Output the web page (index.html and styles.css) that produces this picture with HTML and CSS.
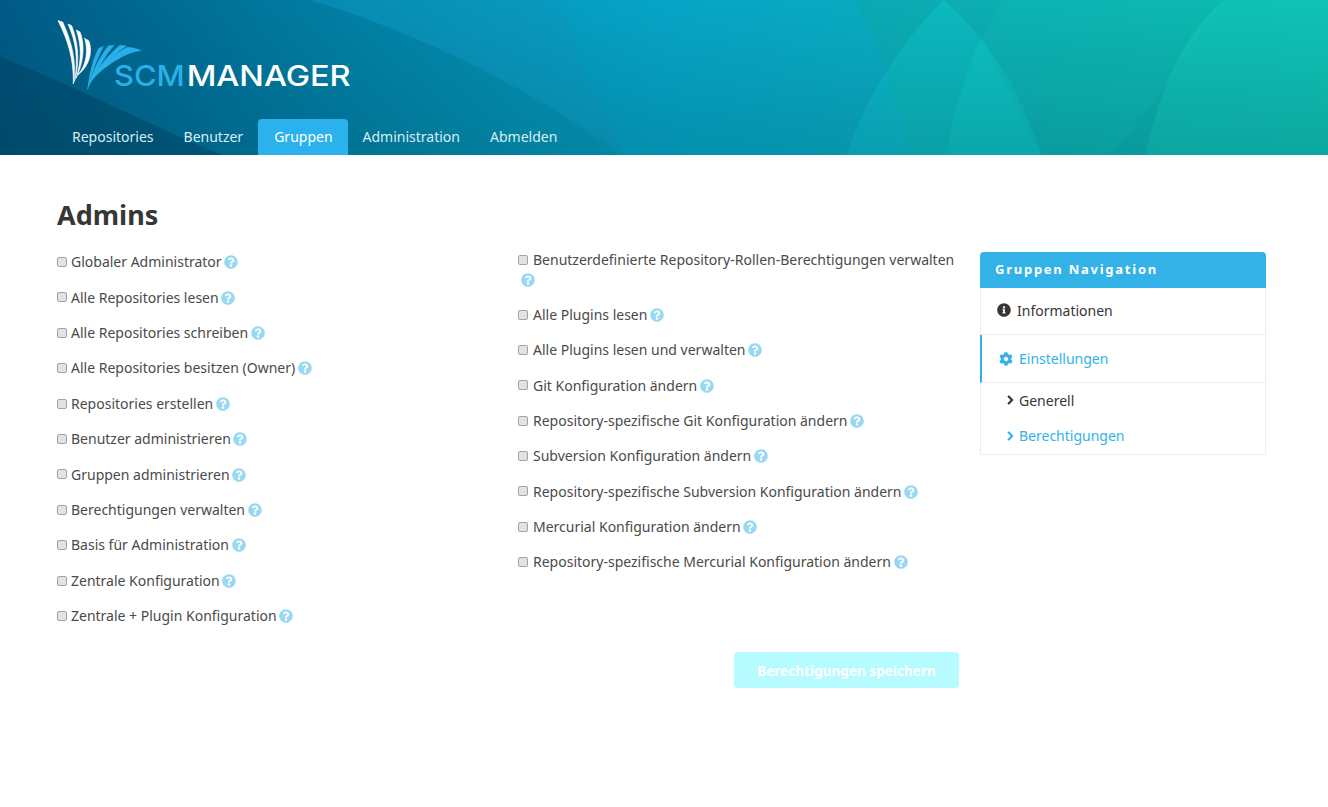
FILE: index.html
```html
<!DOCTYPE html>
<html lang="de">
<head>
  <meta charset="UTF-8">
  <title>SCM-Manager</title>
  <link rel="stylesheet" href="styles.css">
</head>
<body>
  <svg class="icon-defs" width="0" height="0">
    <symbol id="i-help" viewBox="0 0 512 512"><path d="M504 256c0 136.997-111.043 248-248 248S8 392.997 8 256C8 119.083 119.043 8 256 8s248 111.083 248 248zM262.655 90c-54.497 0-89.255 22.957-116.549 63.758-3.536 5.286-2.353 12.415 2.715 16.258l34.699 26.31c5.205 3.947 12.621 3.008 16.665-2.122 17.864-22.658 30.113-35.797 57.303-35.797 20.429 0 45.698 13.148 45.698 32.958 0 14.976-12.363 22.667-32.534 33.976C247.128 238.528 216 254.941 216 296v4c0 6.627 5.373 12 12 12h56c6.627 0 12-5.373 12-12v-1.333c0-28.462 83.186-29.647 83.186-106.667 0-58.002-60.165-102-116.531-102zM256 338c-25.365 0-46 20.635-46 46 0 25.364 20.635 46 46 46s46-20.636 46-46c0-25.365-20.635-46-46-46z"/></symbol>
    <symbol id="i-info" viewBox="0 0 512 512"><path d="M256 8C119.043 8 8 119.083 8 256c0 136.997 111.043 248 248 248s248-111.003 248-248C504 119.083 392.957 8 256 8zm0 110c23.196 0 42 18.804 42 42s-18.804 42-42 42-42-18.804-42-42 18.804-42 42-42zm56 254c0 6.627-5.373 12-12 12h-88c-6.627 0-12-5.373-12-12v-24c0-6.627 5.373-12 12-12h12v-64h-12c-6.627 0-12-5.373-12-12v-24c0-6.627 5.373-12 12-12h64c6.627 0 12 5.373 12 12v100h12c6.627 0 12 5.373 12 12v24z"/></symbol>
    <symbol id="i-cog" viewBox="0 0 512 512"><path d="M487.4 315.7l-42.6-24.6c4.3-23.2 4.3-47 0-70.2l42.6-24.6c4.9-2.8 7.1-8.6 5.5-14-11.1-35.6-30-67.8-54.7-94.6-3.8-4.1-10-5.1-14.8-2.3L380.8 110c-17.9-15.4-38.5-27.3-60.8-35.1V25.8c0-5.6-3.9-10.5-9.4-11.7-36.7-8.2-74.3-7.8-109.2 0-5.5 1.2-9.4 6.1-9.4 11.7V75c-22.2 7.9-42.8 19.8-60.8 35.1L88.7 85.5c-4.9-2.8-11-1.9-14.8 2.3-24.7 26.7-43.6 58.9-54.7 94.6-1.7 5.4.6 11.2 5.5 14L67.3 221c-4.3 23.2-4.3 47 0 70.2l-42.6 24.6c-4.9 2.8-7.1 8.6-5.5 14 11.1 35.6 30 67.8 54.7 94.6 3.8 4.1 10 5.1 14.8 2.3l42.6-24.6c17.9 15.4 38.5 27.3 60.8 35.1v49.2c0 5.6 3.9 10.5 9.4 11.7 36.7 8.2 74.3 7.8 109.2 0 5.5-1.2 9.4-6.1 9.4-11.7v-49.2c22.2-7.9 42.8-19.8 60.8-35.1l42.6 24.6c4.9 2.8 11 1.9 14.8-2.3 24.7-26.7 43.6-58.9 54.7-94.6 1.5-5.5-.7-11.3-5.6-14.1zM256 336c-44.1 0-80-35.9-80-80s35.9-80 80-80 80 35.9 80 80-35.9 80-80 80z"/></symbol>
    <symbol id="i-chevron" viewBox="0 0 320 512"><path d="M285.476 272.971L91.132 467.314c-9.373 9.373-24.569 9.373-33.941 0l-22.667-22.667c-9.357-9.357-9.375-24.522-.04-33.901L188.505 256 34.484 101.255c-9.335-9.379-9.317-24.544.04-33.901l22.667-22.667c9.373-9.373 24.569-9.373 33.941 0L285.475 239.03c9.373 9.372 9.373 24.568.001 33.941z"/></symbol>
  </svg>

  <header class="site-header">
    <!-- header artwork -->
    <svg class="header-bg" viewBox="0 0 1328 155" width="1328" height="155" preserveAspectRatio="none">
      <defs>
        <linearGradient id="bgBase" x1="0" y1="0" x2="1" y2="0">
          <stop offset="0" stop-color="#005a86"/>
          <stop offset="0.25" stop-color="#017ea3"/>
          <stop offset="0.5" stop-color="#059fbd"/>
          <stop offset="0.68" stop-color="#0bacb4"/>
          <stop offset="1" stop-color="#0cb6ae"/>
        </linearGradient>
        <linearGradient id="bgShade" x1="0" y1="0" x2="0" y2="1">
          <stop offset="0" stop-color="#003a50" stop-opacity="0"/>
          <stop offset="1" stop-color="#003a50" stop-opacity="0.2"/>
        </linearGradient>
      </defs>
      <rect width="1328" height="155" fill="url(#bgBase)"/>
      <path d="M0 57C70 84 150 125 222 155H0Z" fill="#003c5a" fill-opacity="0.42"/>
      <path d="M309 0C420 32 540 95 623 155C600 100 575 50 556 0Z" fill="#17a9d6" fill-opacity="0.32"/>
      <path d="M556 0H855C885 60 900 110 908 155H623C600 100 575 50 556 0Z" fill="#08aedb" fill-opacity="0.35"/>
      <path d="M944 0C895 48 866 100 846 155H1041C1020 90 990 40 944 0Z" fill="#0fd0d4" fill-opacity="0.34"/>
      <path d="M1003 0C975 45 955 100 946 155H1109C1140 130 1180 60 1225 0Z" fill="#16dcc0" fill-opacity="0.12"/>
      <path d="M1225 0C1185 30 1160 90 1145 155H1328V0Z" fill="#16dcc0" fill-opacity="0.34"/>
      <path d="M980 37C1003 80 1025 120 1041 155H946C955 110 965 70 980 37Z" fill="#0fd6d0" fill-opacity="0.18"/>
      <rect width="1328" height="155" fill="url(#bgShade)"/>
    </svg>

    <a class="logo" href="#">
      <svg width="320" height="90" viewBox="0 0 960 270">
        <g class="wing-white">
          <path d="M54 32L68 36C92 90 112 150 100 222C102 150 84 90 54 32Z"/>
          <path d="M84 42L95 47C112 90 122 150 103 215C116 150 108 95 84 42Z"/>
          <path d="M109 60L120 66C132 95 136 145 108 205C126 150 124 105 109 60Z"/>
          <path d="M134 85L146 92C156 115 156 160 114 195C142 160 144 120 134 85Z"/>
        </g>
        <g class="wing-blue">
          <path d="M143 238C150 190 158 150 176 115L190 110C168 150 155 190 143 238Z"/>
          <path d="M146 228C160 180 180 140 205 108L222 106C192 140 170 185 146 228Z"/>
          <path d="M150 218C172 175 205 135 240 106L258 108C218 135 185 175 150 218Z"/>
          <path d="M155 208C190 165 225 130 262 112C280 113 295 118 302 122C260 125 205 160 155 208Z"/>
        </g>
        <text class="logo-text logo-scm" x="222" y="228" textLength="212" lengthAdjust="spacingAndGlyphs">SCM</text>
        <text class="logo-text logo-manager" x="440" y="228" textLength="492" lengthAdjust="spacingAndGlyphs">MANAGER</text>
      </svg>
    </a>

    <nav class="main-nav">
      <a href="#">Repositories</a>
      <a href="#">Benutzer</a>
      <a href="#" class="active">Gruppen</a>
      <a href="#">Administration</a>
      <a href="#">Abmelden</a>
    </nav>
  </header>

  <main class="page">
    <h1 class="title">Admins</h1>

    <div class="columns">
      <form class="perm-form">
        <div class="perm-grid">
          <div class="perm-col perm-col-left">
            <label class="perm"><input type="checkbox">Globaler Administrator <svg class="help"><use href="#i-help"/></svg></label>
            <label class="perm"><input type="checkbox">Alle Repositories lesen <svg class="help"><use href="#i-help"/></svg></label>
            <label class="perm"><input type="checkbox">Alle Repositories schreiben <svg class="help"><use href="#i-help"/></svg></label>
            <label class="perm"><input type="checkbox">Alle Repositories besitzen (Owner) <svg class="help"><use href="#i-help"/></svg></label>
            <label class="perm"><input type="checkbox">Repositories erstellen <svg class="help"><use href="#i-help"/></svg></label>
            <label class="perm"><input type="checkbox">Benutzer administrieren <svg class="help"><use href="#i-help"/></svg></label>
            <label class="perm"><input type="checkbox">Gruppen administrieren <svg class="help"><use href="#i-help"/></svg></label>
            <label class="perm"><input type="checkbox">Berechtigungen verwalten <svg class="help"><use href="#i-help"/></svg></label>
            <label class="perm"><input type="checkbox">Basis für Administration <svg class="help"><use href="#i-help"/></svg></label>
            <label class="perm"><input type="checkbox">Zentrale Konfiguration <svg class="help"><use href="#i-help"/></svg></label>
            <label class="perm"><input type="checkbox">Zentrale + Plugin Konfiguration <svg class="help"><use href="#i-help"/></svg></label>
          </div>
          <div class="perm-col perm-col-right">
            <label class="perm"><input type="checkbox">Benutzerdefinierte Repository-Rollen-Berechtigungen verwalten <svg class="help help-wrapped"><use href="#i-help"/></svg></label>
            <label class="perm"><input type="checkbox">Alle Plugins lesen <svg class="help"><use href="#i-help"/></svg></label>
            <label class="perm"><input type="checkbox">Alle Plugins lesen und verwalten <svg class="help"><use href="#i-help"/></svg></label>
            <label class="perm"><input type="checkbox">Git Konfiguration ändern <svg class="help"><use href="#i-help"/></svg></label>
            <label class="perm"><input type="checkbox">Repository-spezifische Git Konfiguration ändern <svg class="help"><use href="#i-help"/></svg></label>
            <label class="perm"><input type="checkbox">Subversion Konfiguration ändern <svg class="help"><use href="#i-help"/></svg></label>
            <label class="perm"><input type="checkbox">Repository-spezifische Subversion Konfiguration ändern <svg class="help"><use href="#i-help"/></svg></label>
            <label class="perm"><input type="checkbox">Mercurial Konfiguration ändern <svg class="help"><use href="#i-help"/></svg></label>
            <label class="perm"><input type="checkbox">Repository-spezifische Mercurial Konfiguration ändern <svg class="help"><use href="#i-help"/></svg></label>
          </div>
        </div>
        <div class="form-actions">
          <button type="button" class="save-btn" disabled>Berechtigungen speichern</button>
        </div>
      </form>

      <aside class="side-nav">
        <p class="side-label">Gruppen Navigation</p>
        <ul class="side-list">
          <li class="side-item"><a href="#"><svg class="side-icon"><use href="#i-info"/></svg>Informationen</a></li>
          <li class="side-item side-item-active"><a href="#"><svg class="side-icon side-icon-cog"><use href="#i-cog"/></svg>Einstellungen</a></li>
          <li class="side-sub">
            <a href="#"><svg class="chev"><use href="#i-chevron"/></svg>Generell</a>
            <a href="#" class="is-active"><svg class="chev"><use href="#i-chevron"/></svg>Berechtigungen</a>
          </li>
        </ul>
      </aside>
    </div>
  </main>
</body>
</html>
```

FILE: styles.css
```css
body {
  margin: 0;
  font-family: "Noto Sans", "Open Sans", sans-serif;
  font-size: 14px;
  color: #363636;
  background-color: #fff;
}

a {
  text-decoration: none;
  color: inherit;
}

.icon-defs {
  position: absolute;
}

/* header */
.site-header {
  position: relative;
  height: 155px;
  overflow: hidden;
  display: flex;
  flex-direction: column;
  padding-left: 57px;
  box-sizing: border-box;
}

.header-bg {
  position: absolute;
  top: 0;
  left: 0;
}

.logo {
  position: relative;
  display: block;
  height: 90px;
  margin: 10px 0 0 -17px;
}

.logo svg {
  display: block;
}

.wing-white {
  fill: #fff;
  stroke: #fff;
  stroke-width: 2;
}

.wing-blue {
  fill: #2ab0e8;
  stroke: #2ab0e8;
  stroke-width: 2;
}

.logo-text {
  font-family: "Inter", sans-serif;
  font-size: 86px;
  font-weight: 500;
}

.logo-scm {
  fill: #2ab0e8;
}

.logo-manager {
  fill: #fff;
}

.main-nav {
  position: relative;
  display: flex;
  margin-top: auto;
}

.main-nav a {
  height: 36px;
  line-height: 36px;
  padding: 0 15px;
  color: #d9eef2;
  font-size: 14px;
  border-radius: 4px 4px 0 0;
}

.main-nav a.active {
  padding: 0 15px 0 16px;
  background-color: #2bb1ec;
  color: #fff;
}

/* content */
.page {
  padding: 0 62px 0 57px;
}

.title {
  margin: 43px 0 0;
  font-size: 27px;
  line-height: 34px;
  font-weight: 700;
  color: #363636;
}

.columns {
  display: flex;
  gap: 21px;
  margin-top: 18px;
}

.perm-form {
  width: 902px;
}

.perm-grid {
  display: grid;
  grid-template-columns: 461px 441px;
}

.perm-col-left {
  padding-top: 2.25px;
}

.perm {
  display: block;
  line-height: 19.6px;
  margin-bottom: 15.75px;
  color: #4a4a4a;
}

.perm-col-left .perm {
  margin-bottom: 15.8px;
}

.perm input {
  appearance: none;
  box-sizing: border-box;
  width: 10px;
  height: 10px;
  margin: 0 4px 3px 0;
  background-color: #e2e2e2;
  border: 1px solid #a3a3a3;
  border-radius: 2px;
  vertical-align: middle;
}

.perm-col-right .perm input {
  margin-right: 5px;
}

.help {
  display: inline-block;
  width: 14px;
  height: 14px;
  margin-left: -1px;
  fill: #98d8f3;
  vertical-align: -2px;
}

.help-wrapped {
  margin-left: 3px;
}

.form-actions {
  display: flex;
  justify-content: flex-end;
  margin-top: 10.5px;
}

.save-btn {
  width: 225px;
  height: 36px;
  border: none;
  border-radius: 4px;
  background-color: #b5fbff;
  color: #fff;
  font-family: inherit;
  font-size: 13.6px;
  font-weight: 700;
}

/* sidebar */
.side-nav {
  width: 286px;
  flex: none;
  margin-top: 2px;
}

.side-label {
  margin: 0;
  height: 36px;
  line-height: 34px;
  padding-left: 15px;
  background-color: #33b2e8;
  border-radius: 4px 4px 0 0;
  color: #fff;
  font-size: 13px;
  font-weight: 700;
  letter-spacing: 1.75px;
}

.side-list {
  margin: 0;
  padding: 0;
  list-style: none;
  border: 1px solid #eee;
  border-top: none;
}

.side-item {
  border-bottom: 1px solid #eee;
}

.side-item a {
  display: flex;
  align-items: center;
  box-sizing: border-box;
  height: 46px;
  padding: 0 0 2px 16px;
  color: #363636;
}

.side-item-active {
  margin-left: -1px;
  border-left: 2px solid #33b2e8;
}

.side-item.side-item-active a {
  height: 47px;
  padding: 0 0 0 17px;
  color: #33b2e8;
}

.side-icon {
  width: 14px;
  height: 14px;
  margin-right: 6px;
  fill: #363636;
}

.side-icon-cog {
  fill: #33b2e8;
}

.side-sub a {
  display: flex;
  align-items: center;
  box-sizing: border-box;
  height: 35.5px;
  padding: 0 0 1px 26px;
  color: #363636;
}

.side-sub a.is-active {
  color: #33b2e8;
}

.chev {
  width: 7px;
  height: 10px;
  margin-right: 5px;
  fill: #363636;
  stroke: #363636;
  stroke-width: 40;
}

.is-active .chev {
  fill: #33b2e8;
  stroke: #33b2e8;
}
```
